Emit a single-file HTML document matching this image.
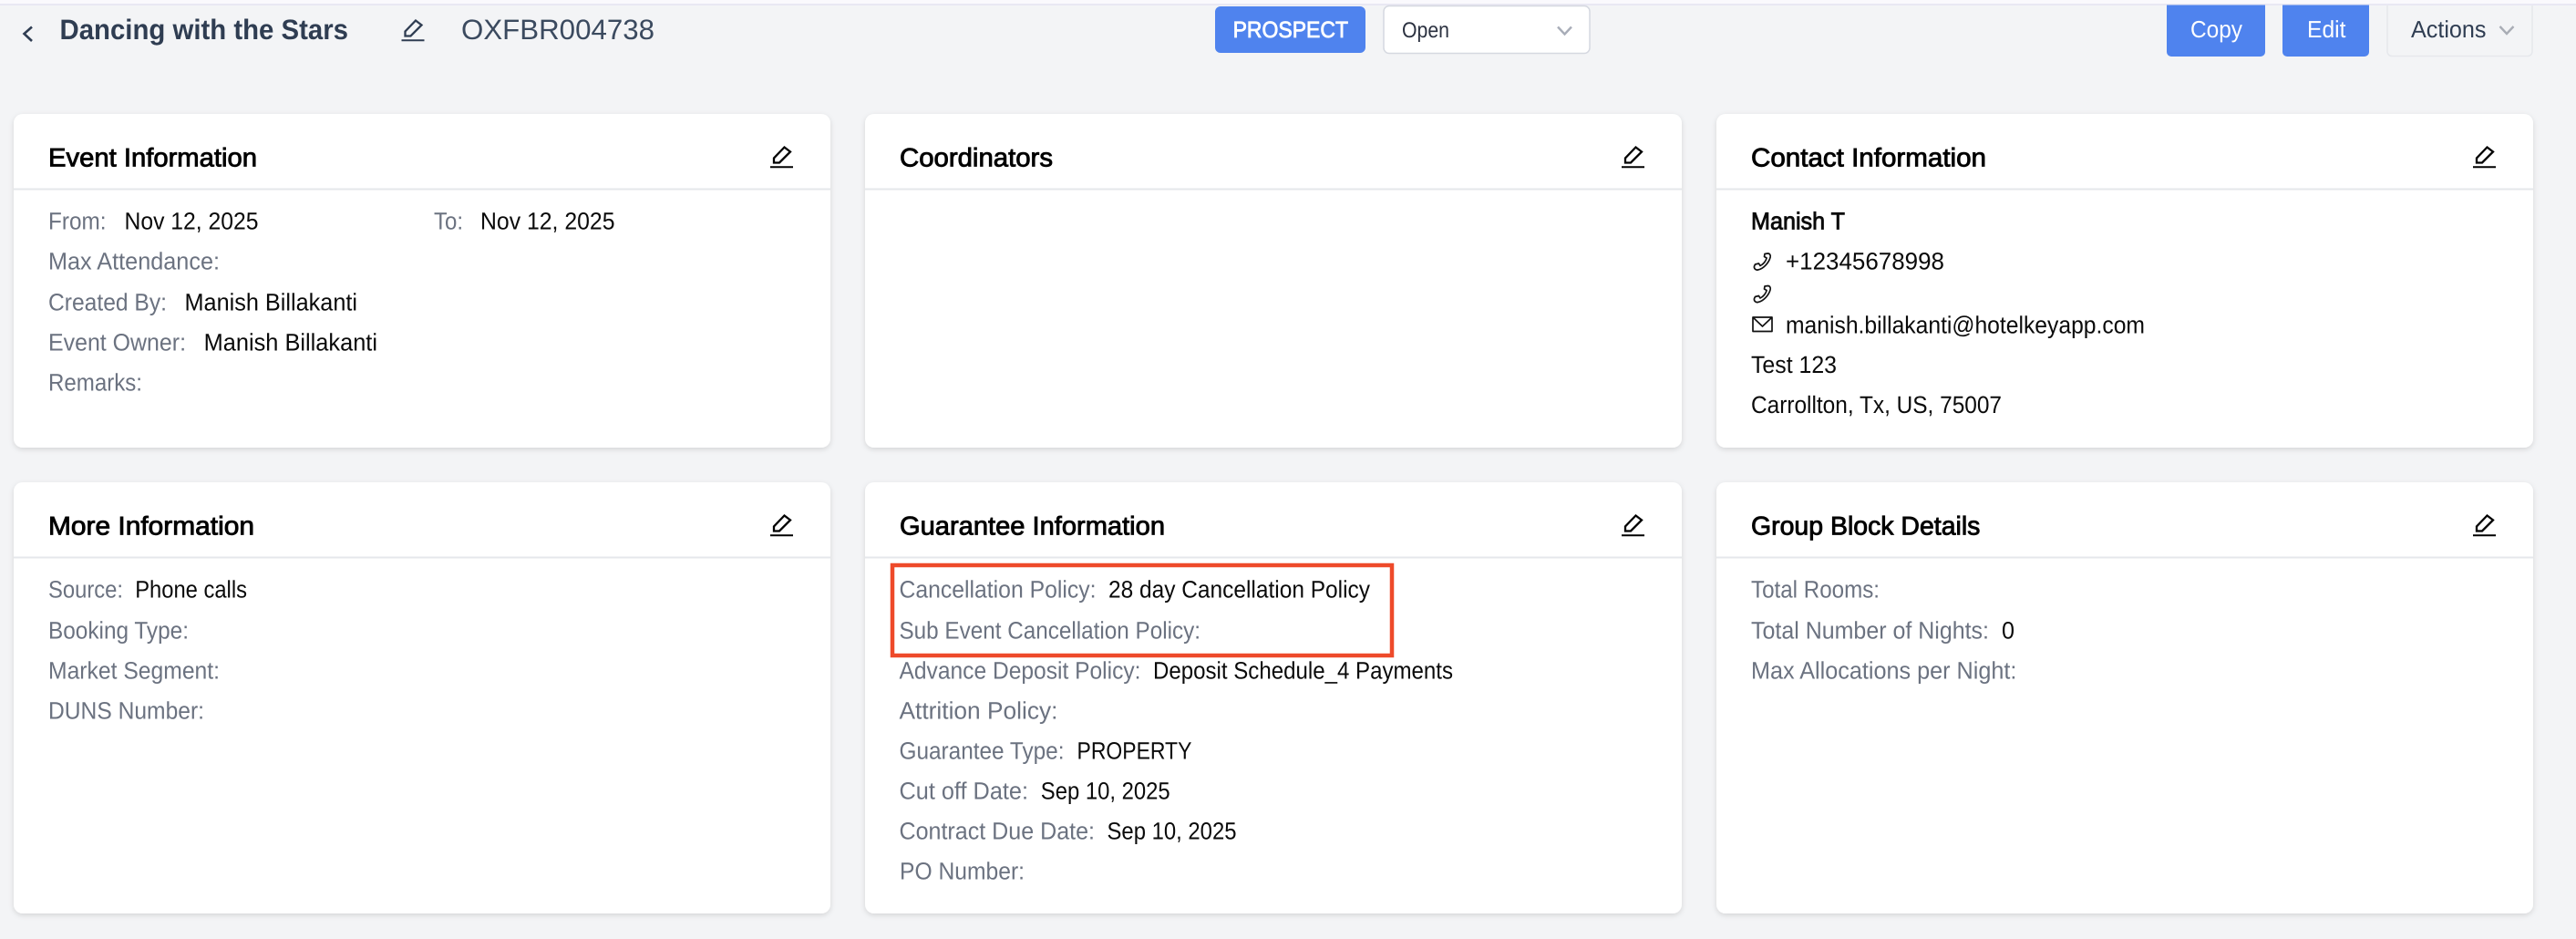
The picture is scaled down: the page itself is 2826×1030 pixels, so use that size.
<!DOCTYPE html>
<html lang="en">
<head>
<meta charset="utf-8">
<title>Dancing with the Stars</title>
<style>
html,body{margin:0;padding:0;width:2826px;height:1030px;overflow:hidden;background:#f3f4f6}
svg{display:block;position:absolute;left:0;top:0}
text{font-family:"Liberation Sans",Arial,sans-serif;text-rendering:geometricPrecision}
.l{font-size:26.5px;fill:#6b7280}
.v{font-size:26.5px;fill:#0a0a0a}
.t{font-size:28.5px;fill:#000;stroke:#000;stroke-width:.85px}
.card{fill:#fff;filter:url(#sh)}
.hr{stroke:#e5e7eb;stroke-width:2}
.pen{fill:none;stroke:#000;stroke-width:2.3}
.ic{fill:none;stroke:#111;stroke-width:1.7;stroke-linejoin:round}
</style>
</head>
<body>
<svg width="2826" height="1030" viewBox="0 0 2826 1030" xmlns="http://www.w3.org/2000/svg">
<defs>
<filter id="sh" x="-3%" y="-3%" width="106%" height="108%">
<feDropShadow dx="0" dy="2" stdDeviation="3" flood-color="#000" flood-opacity=".13"/>
</filter>
<g id="pen">
<path d="M0 23.2H25" stroke-width="2"/>
<path d="M4 18.5V13.500L15.500 1.500 22 6.500 10 18.500Z"/>
</g>
<path id="phone" d="M12.500 1.500L16 1C18 1 19.200 3 18.600 5.200 17.200 11 11 18 5 19 2.500 19.500.5 17.500 1 15L2 13 6 12 7.500 14.500C11 13 14 9 14.600 6L12 4.500Z"/>
</defs>

<rect x="0" y="0" width="2826" height="4" fill="#faf9fd"/>
<rect x="0" y="4" width="2826" height="2" fill="#e9e8f3"/>

<!-- top bar -->
<path d="M35 29.500L26.500 37 35 45" fill="none" stroke="#2f3d52" stroke-width="2.600"/>
<text x="65.500" y="43" font-size="31" font-weight="700" fill="#2f3d52" textLength="316.500" lengthAdjust="spacingAndGlyphs">Dancing with the Stars</text>
<use href="#pen" x="440.500" y="21" fill="none" stroke="#2f3d52" stroke-width="2.300"/>
<text x="506" y="43" font-size="31" fill="#3b4a5f" textLength="212" lengthAdjust="spacingAndGlyphs">OXFBR004738</text>

<rect x="1333" y="7" width="165" height="51" rx="6" fill="#4f83ee"/>
<text x="1352.600" y="41" font-size="25" fill="#fff" stroke="#fff" stroke-width=".8" textLength="126.400" lengthAdjust="spacingAndGlyphs">PROSPECT</text>
<rect x="1518" y="6.500" width="226" height="52" rx="6" fill="#fff" stroke="#d5d8e0" stroke-width="1.500"/>
<text x="1538" y="41" font-size="24" fill="#2b3140" textLength="52" lengthAdjust="spacingAndGlyphs">Open</text>
<path d="M1709 29.500L1716.500 37.500 1724 29.500" fill="none" stroke="#a8adb8" stroke-width="2.400"/>

<path d="M2377 5.500H2485V57a5 5 0 0 1-5 5H2382a5 5 0 0 1-5-5Z" fill="#4f83ee"/>
<text x="2403" y="41" font-size="26" fill="#fff" textLength="57" lengthAdjust="spacingAndGlyphs">Copy</text>
<path d="M2504 5.500H2599V57a5 5 0 0 1-5 5H2509a5 5 0 0 1-5-5Z" fill="#4f83ee"/>
<text x="2531" y="41" font-size="26" fill="#fff" textLength="42.500" lengthAdjust="spacingAndGlyphs">Edit</text>
<path d="M2619 6V56.500a5 5 0 0 0 5 5H2773a5 5 0 0 0 5-5V6" fill="none" stroke="#e6e8ec" stroke-width="1.500"/>
<text x="2645" y="41" font-size="26" fill="#2f3d52" textLength="82.500" lengthAdjust="spacingAndGlyphs">Actions</text>
<path d="M2742.500 29L2750 37 2757.500 29" fill="none" stroke="#a9adb5" stroke-width="2.400"/>

<!-- cards -->
<rect class="card" x="15" y="125" width="896" height="366" rx="10"/>
<rect class="card" x="949" y="125" width="896" height="366" rx="10"/>
<rect class="card" x="1883" y="125" width="896" height="366" rx="10"/>
<rect class="card" x="15" y="529" width="896" height="473" rx="10"/>
<rect class="card" x="949" y="529" width="896" height="473" rx="10"/>
<rect class="card" x="1883" y="529" width="896" height="473" rx="10"/>
<path class="hr" d="M15 207.500H911M949 207.500H1845M1883 207.500H2779M15 611.500H911M949 611.500H1845M1883 611.500H2779"/>

<g class="pen">
<use href="#pen" x="845" y="160"/><use href="#pen" x="1779" y="160"/><use href="#pen" x="2713" y="160"/>
<use href="#pen" x="845" y="564"/><use href="#pen" x="1779" y="564"/><use href="#pen" x="2713" y="564"/>
</g>

<text class="t" x="53" y="182.500" textLength="229" lengthAdjust="spacingAndGlyphs">Event Information</text>
<text class="t" x="987" y="182.500" textLength="168" lengthAdjust="spacingAndGlyphs">Coordinators</text>
<text class="t" x="1921" y="182.500" textLength="258" lengthAdjust="spacingAndGlyphs">Contact Information</text>
<text class="t" x="53" y="586.500" textLength="226" lengthAdjust="spacingAndGlyphs">More Information</text>
<text class="t" x="987" y="586.500" textLength="291" lengthAdjust="spacingAndGlyphs">Guarantee Information</text>
<text class="t" x="1921" y="586.500" textLength="251.400" lengthAdjust="spacingAndGlyphs">Group Block Details</text>

<!-- event info -->
<text class="l" x="53" y="251.500" textLength="63.500" lengthAdjust="spacingAndGlyphs">From:</text>
<text class="v" x="136.500" y="251.500" textLength="147" lengthAdjust="spacingAndGlyphs">Nov 12, 2025</text>
<text class="l" x="476" y="251.500" textLength="32" lengthAdjust="spacingAndGlyphs">To:</text>
<text class="v" x="527" y="251.500" textLength="147.500" lengthAdjust="spacingAndGlyphs">Nov 12, 2025</text>
<text class="l" x="53" y="295.500" textLength="188" lengthAdjust="spacingAndGlyphs">Max Attendance:</text>
<text class="l" x="53" y="340.500" textLength="130" lengthAdjust="spacingAndGlyphs">Created By:</text>
<text class="v" x="202.500" y="340.500" textLength="189.500" lengthAdjust="spacingAndGlyphs">Manish Billakanti</text>
<text class="l" x="53" y="384.500" textLength="151" lengthAdjust="spacingAndGlyphs">Event Owner:</text>
<text class="v" x="223.600" y="384.500" textLength="190.400" lengthAdjust="spacingAndGlyphs">Manish Billakanti</text>
<text class="l" x="53" y="428.500" textLength="103" lengthAdjust="spacingAndGlyphs">Remarks:</text>

<!-- contact -->
<text class="v" x="1921" y="251.500" stroke="#0a0a0a" stroke-width=".85" textLength="103" lengthAdjust="spacingAndGlyphs">Manish T</text>
<use href="#phone" x="1923.500" y="277" class="ic"/>
<text class="v" x="1959" y="295.500" textLength="174" lengthAdjust="spacingAndGlyphs">+12345678998</text>
<use href="#phone" x="1923.500" y="312.500" class="ic"/>
<rect x="1923" y="348" width="21" height="15.500" class="ic" stroke-width="2"/>
<path d="M1923.500 348.500L1933.500 358 1943.500 348.500" class="ic"/>
<text class="v" x="1959" y="365.500" textLength="394" lengthAdjust="spacingAndGlyphs">manish.billakanti@hotelkeyapp.com</text>
<text class="v" x="1921" y="409" textLength="94" lengthAdjust="spacingAndGlyphs">Test 123</text>
<text class="v" x="1921" y="453" textLength="275" lengthAdjust="spacingAndGlyphs">Carrollton, Tx, US, 75007</text>

<!-- more info -->
<text class="l" x="53" y="655.500" textLength="82" lengthAdjust="spacingAndGlyphs">Source:</text>
<text class="v" x="148.200" y="655.500" textLength="122.800" lengthAdjust="spacingAndGlyphs">Phone calls</text>
<text class="l" x="53" y="700.500" textLength="154" lengthAdjust="spacingAndGlyphs">Booking Type:</text>
<text class="l" x="53" y="744.500" textLength="188" lengthAdjust="spacingAndGlyphs">Market Segment:</text>
<text class="l" x="53" y="788.500" textLength="171" lengthAdjust="spacingAndGlyphs">DUNS Number:</text>

<!-- guarantee -->
<rect x="979" y="620" width="548" height="99" fill="none" stroke="#ee4a2a" stroke-width="4.500"/>
<text class="l" x="986.500" y="655.500" textLength="216" lengthAdjust="spacingAndGlyphs">Cancellation Policy:</text>
<text class="v" x="1216" y="655.500" textLength="287" lengthAdjust="spacingAndGlyphs">28 day Cancellation Policy</text>
<text class="l" x="986.500" y="700.500" textLength="330.500" lengthAdjust="spacingAndGlyphs">Sub Event Cancellation Policy:</text>
<text class="l" x="986.500" y="744.500" textLength="265" lengthAdjust="spacingAndGlyphs">Advance Deposit Policy:</text>
<text class="v" x="1265" y="744.500" textLength="329" lengthAdjust="spacingAndGlyphs">Deposit Schedule_4 Payments</text>
<text class="l" x="986.500" y="788.500" textLength="174" lengthAdjust="spacingAndGlyphs">Attrition Policy:</text>
<text class="l" x="986.500" y="832.500" textLength="181" lengthAdjust="spacingAndGlyphs">Guarantee Type:</text>
<text class="v" x="1181.500" y="832.500" textLength="125.900" lengthAdjust="spacingAndGlyphs">PROPERTY</text>
<text class="l" x="986.500" y="876.500" textLength="141.500" lengthAdjust="spacingAndGlyphs">Cut off Date:</text>
<text class="v" x="1141.800" y="876.500" textLength="141.900" lengthAdjust="spacingAndGlyphs">Sep 10, 2025</text>
<text class="l" x="986.500" y="920.500" textLength="214.500" lengthAdjust="spacingAndGlyphs">Contract Due Date:</text>
<text class="v" x="1214.500" y="920.500" textLength="142" lengthAdjust="spacingAndGlyphs">Sep 10, 2025</text>
<text class="l" x="987" y="964.500" textLength="137" lengthAdjust="spacingAndGlyphs">PO Number:</text>

<!-- group block -->
<text class="l" x="1921" y="655.500" textLength="141" lengthAdjust="spacingAndGlyphs">Total Rooms:</text>
<text class="l" x="1921" y="700.500" textLength="261" lengthAdjust="spacingAndGlyphs">Total Number of Nights:</text>
<text class="v" x="2196" y="700.500" textLength="14" lengthAdjust="spacingAndGlyphs">0</text>
<text class="l" x="1921" y="744.500" textLength="291.400" lengthAdjust="spacingAndGlyphs">Max Allocations per Night:</text>
</svg>
</body>
</html>
